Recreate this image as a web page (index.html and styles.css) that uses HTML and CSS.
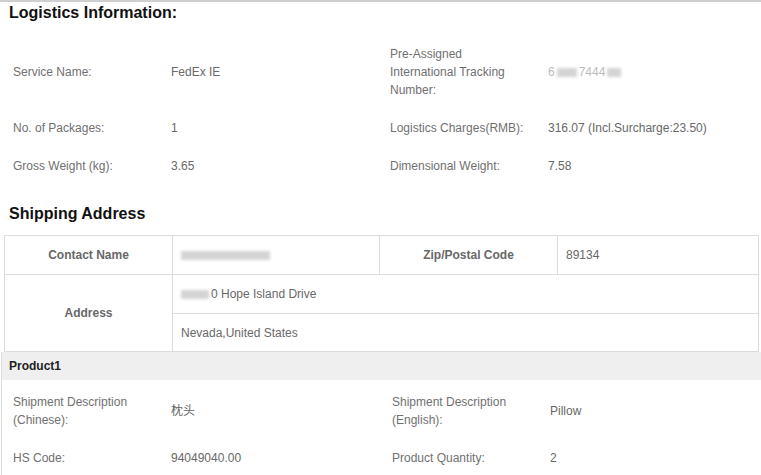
FILE: index.html
```html
<!DOCTYPE html>
<html lang="en">
<head>
    <meta charset="UTF-8">
    <title>Logistics Information</title>
    <link rel="stylesheet" href="styles.css">
</head>
<body>
    <div class="page">
        <h2 class="section-title">Logistics Information:</h2>

        <div class="info-grid">
            <div class="label">Service Name:</div>
            <div class="value">FedEx IE</div>
            <div class="label">Pre-Assigned<br>International Tracking<br>Number:</div>
            <div class="value"><span class="masked-text">6<span class="blur-block short"></span>7444<span class="blur-block tiny"></span></span></div>

            <div class="label">No. of Packages:</div>
            <div class="value">1</div>
            <div class="label">Logistics Charges(RMB):</div>
            <div class="value">316.07 (Incl.Surcharge:23.50)</div>

            <div class="label">Gross Weight (kg):</div>
            <div class="value">3.65</div>
            <div class="label">Dimensional Weight:</div>
            <div class="value">7.58</div>
        </div>

        <h2 class="section-title shipping">Shipping Address</h2>

        <table class="address-table">
            <tr>
                <th class="col-a">Contact Name</th>
                <td class="col-b"><span class="blur-block name"></span></td>
                <th class="col-c">Zip/Postal Code</th>
                <td>89134</td>
            </tr>
            <tr>
                <th rowspan="2">Address</th>
                <td colspan="3"><span class="blur-block street"></span>0 Hope Island Drive</td>
            </tr>
            <tr>
                <td colspan="3" class="last">Nevada,United States</td>
            </tr>
        </table>

        <div class="product">
            <div class="product-head">Product1</div>
            <div class="info-grid product-grid">
                <div class="label">Shipment Description<br>(Chinese):</div>
                <div class="value">枕头</div>
                <div class="label">Shipment Description<br>(English):</div>
                <div class="value">Pillow</div>

                <div class="label">HS Code:</div>
                <div class="value">94049040.00</div>
                <div class="label">Product Quantity:</div>
                <div class="value">2</div>
            </div>
        </div>
    </div>
</body>
</html>
```

FILE: styles.css
```css
body {
    margin: 0;
    background: #fff;
    font-family: "Liberation Sans", Arial, "Noto Sans CJK SC", sans-serif;
    font-size: 12px;
    color: #666;
}

.page {
    border-top: 2px solid #cfcfcf;
    overflow: hidden;
}

.section-title {
    margin: 0 0 0 9px;
    font-size: 16px;
    line-height: 22px;
    font-weight: bold;
    color: #111;
}

.section-title.shipping {
    margin-top: 18px;
}

.info-grid {
    display: grid;
    grid-template-columns: 158px 219px 158px 1fr;
    align-items: center;
    padding-left: 13px;
    margin-top: 11px;
}

.info-grid .label,
.info-grid .value {
    padding: 10px 0;
    line-height: 18px;
}

.info-grid .label {
    color: #707070;
}

.info-grid .value {
    color: #686868;
}

.masked-text {
    color: #bbb;
    display: inline-flex;
    align-items: center;
}

.blur-block {
    display: inline-block;
    height: 9px;
    background: #d4d4d4;
    filter: blur(1.5px);
    vertical-align: middle;
}

.blur-block.short { width: 20px; margin: 0 2px; }
.blur-block.tiny { width: 14px; margin-left: 2px; }
.blur-block.name { width: 89px; }
.blur-block.street { width: 28px; margin-right: 2px; }

.address-table {
    border-collapse: collapse;
    margin: 10px 0 0 4px;
    width: 755px;
}

.address-table th,
.address-table td {
    border: 1px solid #dcdcdc;
    height: 38px;
    padding: 0 8px;
    text-align: left;
    font-weight: normal;
    color: #686868;
}

.address-table td.last {
    height: 37px;
}

.address-table th {
    text-align: center;
    font-weight: bold;
    color: #686868;
}

.address-table .col-a { width: 151px; }
.address-table .col-b { width: 190px; }
.address-table .col-c { width: 161px; }

.product {
    border-left: 1px solid #dcdcdc;
    margin-left: 1px;
}

.product-head {
    background: #efefef;
    height: 28px;
    line-height: 28px;
    padding-left: 7px;
    font-weight: bold;
    color: #222;
}

.product-grid {
    margin-top: 3px;
    padding-left: 11px;
    grid-template-columns: 158px 221px 158px 1fr;
}
```
